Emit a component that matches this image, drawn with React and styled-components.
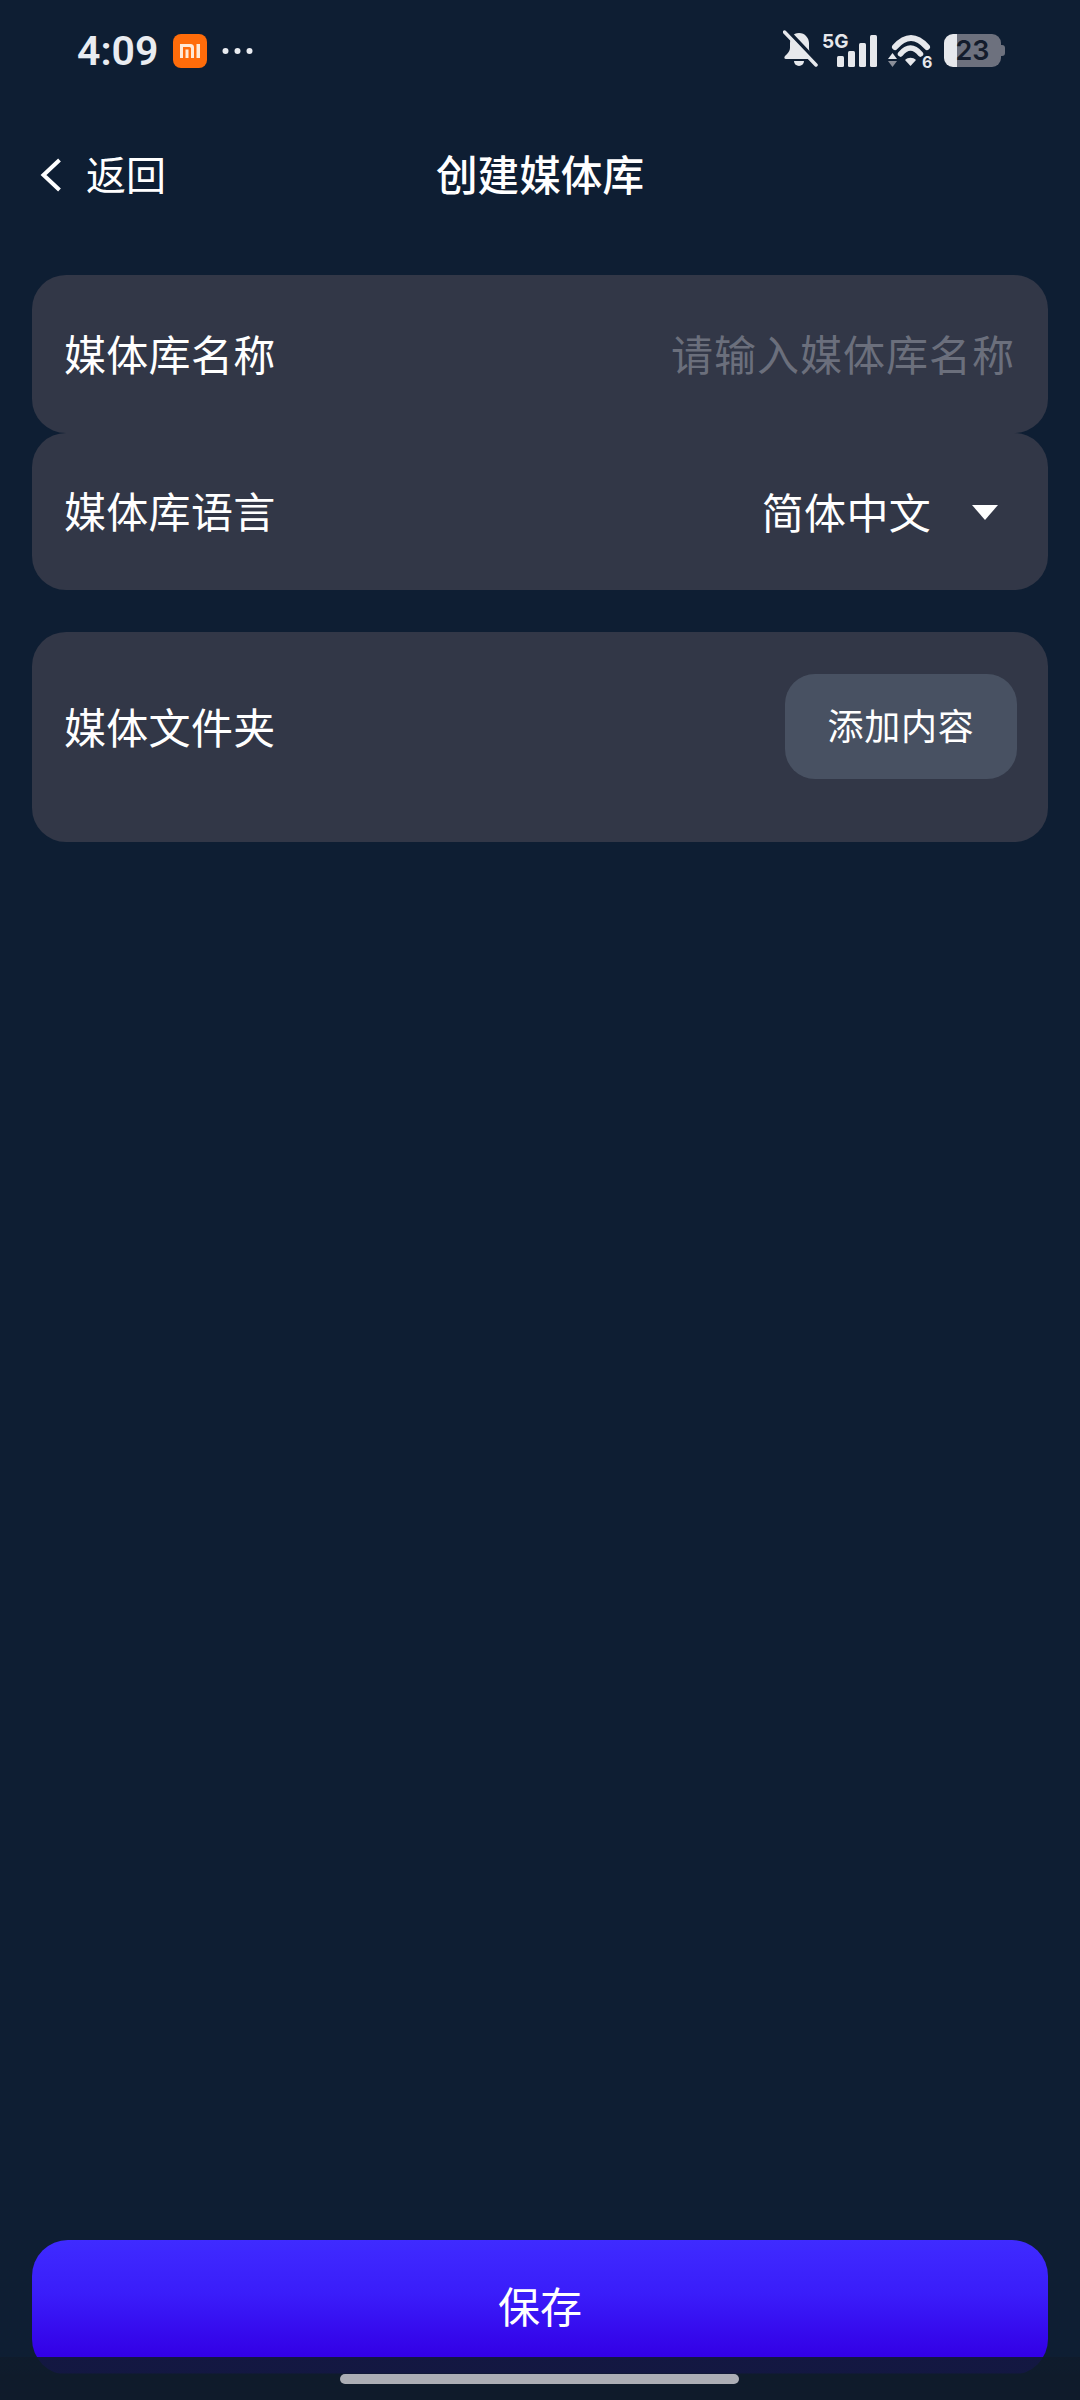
import React from 'react';
import styled, { createGlobalStyle } from 'styled-components';

const GlobalStyle = createGlobalStyle`
    html, body {
        margin: 0;
        padding: 0;
        background: #0e1e33;
    }
    * {
        box-sizing: border-box;
    }
`
const Page = styled.div`
    position: relative;
    width: 1080px;
    height: 2400px;
    display: flex;
    flex-direction: column;
    overflow: hidden;
    background-color: #0e1e33;
    color: #ffffff;
    font-family: "Noto Sans CJK SC", "Noto Sans", sans-serif;
    font-weight: 400;
`
const StatusBar = styled.div`
    height: 100px;
    flex: none;
    display: flex;
    align-items: flex-start;
    justify-content: space-between;
    padding: 34px 79px 0 77px;
`
const StatusLeft = styled.div`
    display: flex;
    align-items: center;
    height: 34px;
`
const Time = styled.span`
    font-family: Roboto, "Liberation Sans", sans-serif;
    font-size: 41px;
    font-weight: 600;
    line-height: 34px;
    color: #e9ecf1;
    width: 96px;
`
const MiBadge = styled.svg`
    width: 34px;
    height: 34px;
    display: block;
`
const Dots = styled.svg`
    width: 32px;
    height: 8px;
    margin-left: 15px;
    display: block;
`
const StatusRight = styled.div`
    display: flex;
    align-items: flex-start;
    height: 36px;
`
const StatusIcon = styled.svg`
    display: block;
    flex: none;
    margin-left: ${(props) => props.$gap || 0}px;
    margin-top: ${(props) => props.$top || 0}px;
`
const Battery = styled.div`
    position: relative;
    width: 57px;
    height: 33px;
    margin-left: 11px;
    border-radius: 9px;
    display: flex;
    align-items: center;
    justify-content: center;
    background: linear-gradient(to right, #e6e8ec 0, #e6e8ec 13px, #6d717e 13px);
    font-family: Inter, "Liberation Sans", sans-serif;
    font-size: 27px;
    font-weight: 600;
    color: #131c2c;
    &::after {
        content: "";
        position: absolute;
        right: -4px;
        top: 11px;
        width: 4px;
        height: 11px;
        border-radius: 0 3px 3px 0;
        background: #6d717e;
    }
`
const Header = styled.div`
    position: relative;
    height: 150px;
    flex: none;
    display: flex;
    align-items: center;
    justify-content: center;
`
const BackButton = styled.div`
    position: absolute;
    left: 40px;
    top: 49px;
    display: flex;
    align-items: center;
    gap: 24px;
    font-size: 40px;
    line-height: 54px;
`
const BackLabel = styled.span`
    margin-top: -3px;
`
const Title = styled.div`
    font-size: 41.6px;
    font-weight: 500;
    line-height: 50px;
    margin-top: -4px;
`
const Content = styled.div`
    flex: 1;
    display: flex;
    flex-direction: column;
    padding: 25px 32px 0;
`
const Card = styled.div`
    height: ${(props) => props.$height}px;
    margin-top: ${(props) => props.$top || 0}px;
    padding: 0 31px 0 32px;
    display: flex;
    align-items: ${(props) => (props.$start ? 'flex-start' : 'center')};
    justify-content: space-between;
    background-color: #323747;
    border-radius: 34px;
    flex: none;
`
const Label = styled.div`
    font-size: 42px;
    line-height: 56px;
    letter-spacing: 0.3px;
    margin-top: ${(props) => (props.$start ? '66px' : '-3px')};
`
const Placeholder = styled.div`
    font-size: 42px;
    line-height: 56px;
    letter-spacing: 1px;
    color: #6b6f7c;
    margin: -3px 2px 0 0;
`
const Select = styled.div`
    display: flex;
    align-items: center;
    font-size: 42px;
    line-height: 56px;
    letter-spacing: 0.3px;
    padding-right: 19px;
    margin-top: -1px;
`
const Caret = styled.div`
    width: 0;
    height: 0;
    margin: 2px 0 0 41px;
    border-left: 13px solid transparent;
    border-right: 13px solid transparent;
    border-top: 15px solid #ffffff;
`
const AddButton = styled.div`
    width: 232px;
    height: 105px;
    margin-top: 42px;
    padding-bottom: 5px;
    display: flex;
    align-items: center;
    justify-content: center;
    background-color: #485162;
    border-radius: 30px;
    font-size: 36px;
    letter-spacing: 0.8px;
`
const Footer = styled.div`
    flex: none;
    padding: 0 32px;
    height: 160px;
`
const SaveButton = styled.div`
    height: 135px;
    display: flex;
    align-items: flex-start;
    justify-content: center;
    padding-top: 37px;
    border-radius: 36px;
    background: linear-gradient(to bottom, #3f2bff 0%, #3a1dfa 40%, #3300e6 85%, #3300e6 100%);
    font-size: 42px;
    line-height: 56px;
`
const NavBar = styled.div`
    position: absolute;
    left: 0;
    right: 0;
    bottom: 0;
    height: 43px;
    padding-top: 17px;
    display: flex;
    justify-content: center;
    align-items: flex-start;
    background: linear-gradient(to bottom, rgba(15, 27, 43, 0.88) 0, rgba(15, 27, 43, 0.88) 16px, #0f1b2b 17px);
`
const HomeBar = styled.div`
    width: 399px;
    height: 10px;
    margin-left: -2px;
    border-radius: 5px;
    background-color: #acaeb5;
`

const App = () => {
    return (
        <Page>
            <GlobalStyle />
            <StatusBar>
                <StatusLeft>
                    <Time>4:09</Time>
                    <MiBadge viewBox="0 0 34 34">
                        <rect width="34" height="34" rx="8" fill="#ff6c0a" />
                        <path d="M7 10h10.500a3.500 3.500 0 0 1 3.500 3.500V24h-3V14.500a1.500 1.500 0 0 0-1.500-1.500H10v11H7zM12.500 15.500h3V24h-3zM23.500 10h3.500v14h-3.500z" fill="#ffe9d6" />
                    </MiBadge>
                    <Dots viewBox="0 0 32 8">
                        <circle cx="3.500" cy="4" r="3" fill="#e9ecf1" />
                        <circle cx="15.500" cy="4" r="3" fill="#e9ecf1" />
                        <circle cx="27.500" cy="4" r="3" fill="#e9ecf1" />
                    </Dots>
                </StatusLeft>
                <StatusRight>
                    <StatusIcon width="35" height="38" viewBox="0 0 35 38" $top="-4">
                        <path d="M16 3C10 3 7 8 7 13v5c0 3-2 5-5 8-1 1-1 3 1 3h25c1.500 0 2-1.500 1-3-2-2.500-3-5-3-8v-5C26 8 22 3 16 3z" fill="#e6e8ec" />
                        <path d="M11 31h10a5 5 0 0 1-10 0z" fill="#e6e8ec" />
                        <path d="M4 0 35 33" stroke="#0e1e33" strokeWidth="4" />
                        <path d="M1.500 2 33 35" stroke="#e6e8ec" strokeWidth="3.500" strokeLinecap="round" />
                    </StatusIcon>
                    <StatusIcon width="56" height="40" viewBox="0 -4 56 40" $gap="3" $top="-4">
                        <text x="1" y="14" fontFamily="Inter, Liberation Sans, sans-serif" fontSize="19" fontWeight="700" fill="#e6e8ec">5G</text>
                        <rect x="16" y="22" width="7" height="11" rx="1.500" fill="#e6e8ec" />
                        <rect x="27" y="17" width="7" height="16" rx="1.500" fill="#e6e8ec" />
                        <rect x="38" y="9" width="7" height="24" rx="1.500" fill="#e6e8ec" />
                        <rect x="49" y="1" width="7" height="32" rx="1.500" fill="#e6e8ec" />
                    </StatusIcon>
                    <StatusIcon width="45" height="42" viewBox="0 0 45 42" $gap="11">
                        <path d="M7 13Q23 -5 39 13" fill="none" stroke="#e6e8ec" strokeWidth="6" strokeLinecap="round" />
                        <path d="M12.500 20Q22.500 8 32.500 20" fill="none" stroke="#e6e8ec" strokeWidth="5.500" strokeLinecap="round" />
                        <path d="M17 26c3-3 8-3 11 0l-5.500 6z" fill="#e6e8ec" />
                        <path d="M4.500 19 9 25H0z" fill="#e6e8ec" />
                        <path d="M0 27h9l-4.500 6z" fill="#8b8f99" />
                        <text x="34" y="34" fontFamily="Inter, Liberation Sans, sans-serif" fontSize="16" fontWeight="700" fill="#e6e8ec">6</text>
                    </StatusIcon>
                    <Battery>23</Battery>
                </StatusRight>
            </StatusBar>
            <Header>
                <BackButton>
                    <svg width="22" height="34" viewBox="0 0 22 34">
                        <path d="M19.500 2 3.500 17l16 15" fill="none" stroke="#ffffff" strokeWidth="4" />
                    </svg>
                    <BackLabel>返回</BackLabel>
                </BackButton>
                <Title>创建媒体库</Title>
            </Header>
            <Content>
                <Card $height={158}>
                    <Label>媒体库名称</Label>
                    <Placeholder>请输入媒体库名称</Placeholder>
                </Card>
                <Card $height={157}>
                    <Label>媒体库语言</Label>
                    <Select>
                        简体中文
                        <Caret />
                    </Select>
                </Card>
                <Card $height={210} $top={42} $start>
                    <Label $start>媒体文件夹</Label>
                    <AddButton>添加内容</AddButton>
                </Card>
            </Content>
            <Footer>
                <SaveButton>保存</SaveButton>
            </Footer>
            <NavBar>
                <HomeBar />
            </NavBar>
        </Page>
    );
};

export default App;
